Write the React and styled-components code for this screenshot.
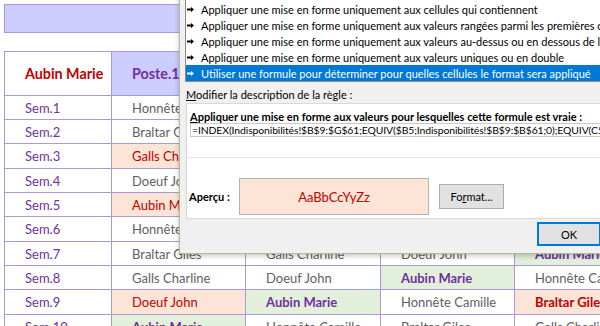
import React from 'react';
import styled, { createGlobalStyle } from 'styled-components';

const GlobalStyle = createGlobalStyle`
  html, body {
    margin: 0;
    padding: 0;
    background: #fff;
    overflow: hidden;
  }
  * { box-sizing: border-box; }
`;

const GRID = '#ab98d6';

const Page = styled.div`
  position: relative;
  width: 600px;
  height: 326px;
  overflow: hidden;
  background: #fff;
  font-family: Lato, "Liberation Sans", sans-serif;
`;

const Sheet = styled.div`
  padding: 4px 0 0 4px;
`;

const TitleBand = styled.div`
  width: 645px;
  height: 29px;
  background: #ccccff;
  border: 1px solid ${GRID};
`;

const Grid = styled.div`
  margin-top: 18px;
  display: grid;
  grid-template-columns: 107px 134px 135px 134px 134px;
  grid-template-rows: 43.5px;
  grid-auto-rows: 24.35px;
  width: max-content;
  border-top: 1px solid ${GRID};
  border-left: 1px solid ${GRID};
`;

const looks = {
  head: { bg: '#fff', color: '#c00000', weight: 700 },
  post: { bg: '#ccccff', color: '#7030a0', weight: 700 },
  week: { bg: '#fff', color: '#7030a0', weight: 400 },
  n: { bg: '#fff', color: '#5f5f5f', weight: 400 },
  r: { bg: '#fce4d6', color: '#c00000', weight: 400 },
  R: { bg: '#fce4d6', color: '#c00000', weight: 700 },
  g: { bg: '#e2efda', color: '#7030a0', weight: 700 },
};

const Cell = styled.div`
  display: flex;
  align-items: center;
  padding-left: 20px;
  padding-top: 1px;
  border-right: 1px solid ${GRID};
  border-bottom: 1px solid ${GRID};
  background: ${p => looks[p.$kind].bg};
  color: ${p => looks[p.$kind].color};
  font-weight: ${p => looks[p.$kind].weight};
  font-size: ${p => (p.$kind === 'head' || p.$kind === 'post' ? '14.3px' : '13px')};
  white-space: nowrap;
  overflow: hidden;
`;

/* ---------- dialog ---------- */

const Dialog = styled.div`
  position: absolute;
  left: 179px;
  top: -20px;
  width: 515px;
  height: 274px;
  display: flex;
  flex-direction: column;
  padding: 3px 10px 0 5px;
  background: #f0f0f0;
  border: 1px solid #a7c095;
  box-shadow: 0 2px 5px rgba(0, 0, 0, 0.22);
  font-family: Lato, "Noto Sans", sans-serif;
  font-size: 11px;
  color: #000;
`;

const ListBox = styled.div`
  background: #fff;
  border: 1px solid #8c8c8c;
`;

const Item = styled.div`
  display: flex;
  align-items: center;
  height: 16px;
  padding-left: 1px;
  white-space: nowrap;
  overflow: hidden;
  background: ${p => (p.$selected ? '#0078d7' : 'transparent')};
  color: ${p => (p.$selected ? '#fff' : '#000')};
`;

const Bullet = styled.span`
  display: inline-flex;
  width: 14px;
  flex: none;
`;

const SectionLabel = styled.div`
  margin-top: 5px;
  height: 16px;
  line-height: 16px;
  padding-left: 1px;
`;

const Key = styled.span`
  text-decoration: underline;
`;

const DescBox = styled.div`
  margin-left: 1px;
  background: #fff;
  border: 1px solid #d9d9d9;
`;

const Upper = styled.div`
  padding: 6px 0 20px 3px;
`;

const RuleTitle = styled.div`
  height: 13px;
  line-height: 13px;
  font-weight: 700;
  white-space: nowrap;
`;

const Formula = styled.div`
  height: 14px;
  line-height: 12px;
  padding-left: 1px;
  border: 1px solid #c9c9c9;
  font-size: 10.4px;
  letter-spacing: -0.1px;
  white-space: nowrap;
  overflow: hidden;
`;

const Lower = styled.div`
  display: flex;
  align-items: center;
  padding: 20px 0 3px 2px;
  border-top: 1px solid #e6e6e6;
`;

const PreviewLabel = styled.div`
  width: 50px;
  font-weight: 700;
`;

const Preview = styled.div`
  width: 190px;
  height: 37px;
  display: flex;
  align-items: center;
  justify-content: center;
  background: #fce4d6;
  border: 1px solid #b3b3b3;
  color: #c00000;
  font-size: 13px;
`;

const Button = styled.div`
  display: flex;
  align-items: center;
  justify-content: center;
  width: ${p => p.$w}px;
  height: ${p => p.$h}px;
  margin-left: ${p => p.$ml || 0}px;
  background: #e1e1e1;
  border: 1px solid ${p => (p.$default ? '#0078d7' : '#adadad')};
  box-shadow: ${p => (p.$default ? 'inset 0 0 0 1px #0078d7' : 'none')};
`;

const Footer = styled.div`
  display: flex;
  justify-content: flex-end;
  gap: 7px;
  margin-top: 3px;
`;

const NAMES = ['Honnête Camille', 'Braltar Giles', 'Galls Charline', 'Doeuf John', 'Aubin Marie'];
const RED = { '2-0': 'r', '4-0': 'r', '8-0': 'r', '8-3': 'R' };

const rules = [
  "Mettre en forme toutes les cellules d'après leur valeur",
  'Appliquer une mise en forme uniquement aux cellules qui contiennent',
  'Appliquer une mise en forme uniquement aux valeurs rangées parmi les premières ou les dernières valeurs',
  'Appliquer une mise en forme uniquement aux valeurs au-dessus ou en dessous de la moyenne',
  'Appliquer une mise en forme uniquement aux valeurs uniques ou en double',
  'Utiliser une formule pour déterminer pour quelles cellules le format sera appliqué',
];

function Arrow({ color }) {
  return (
    <svg width="7" height="5" viewBox="0 0 7 5">
      <polygon points="0,1.4 4,1.4 4,0 7,2.5 4,5 4,3.6 0,3.6" fill={color} />
    </svg>
  );
}

function Planning() {
  const weeks = Array.from({ length: 10 }, (_, i) => i);
  return (
    <Grid>
      <Cell $kind="head">Aubin Marie</Cell>
      {[1, 2, 3, 4].map(n => (
        <Cell key={n} $kind="post">Poste.{n}</Cell>
      ))}
      {weeks.map(i => (
        <React.Fragment key={i}>
          <Cell $kind="week">Sem.{i + 1}</Cell>
          {[0, 1, 2, 3].map(c => {
            const name = NAMES[(i + c) % 5];
            const kind = RED[`${i}-${c}`] || (name === 'Aubin Marie' ? 'g' : 'n');
            return (
              <Cell key={c} $kind={kind}>{name}</Cell>
            );
          })}
        </React.Fragment>
      ))}
    </Grid>
  );
}

function RuleDialog() {
  return (
    <Dialog>
      <ListBox>
        {rules.map((r, i) => (
          <Item key={i} $selected={i === 5}>
            <Bullet><Arrow color={i === 5 ? '#fff' : '#000'} /></Bullet>
            {r}
          </Item>
        ))}
      </ListBox>
      <SectionLabel><Key>M</Key>odifier la description de la règle :</SectionLabel>
      <DescBox>
        <Upper>
          <RuleTitle>
            <Key>A</Key>ppliquer une mise en forme aux valeurs pour lesquelles cette formule est vraie :
          </RuleTitle>
          <Formula>
            =INDEX(Indisponibilités!$B$9:$G$61;EQUIV($B5;Indisponibilités!$B$9:$B$61;0);EQUIV(C5;Indisponibilités!$B$8:$G$8;0))="x"
          </Formula>
        </Upper>
        <Lower>
          <PreviewLabel>Aperçu :</PreviewLabel>
          <Preview>AaBbCcYyZz</Preview>
          <Button $w={65} $h={25} $ml={10}>Fo<Key>r</Key>mat...</Button>
        </Lower>
      </DescBox>
      <Footer>
        <Button $w={64} $h={24} $default>OK</Button>
        <Button $w={75} $h={24}>Annuler</Button>
      </Footer>
    </Dialog>
  );
}

export default function App() {
  return (
    <Page>
      <GlobalStyle />
      <Sheet>
        <TitleBand />
        <Planning />
      </Sheet>
      <RuleDialog />
    </Page>
  );
}
